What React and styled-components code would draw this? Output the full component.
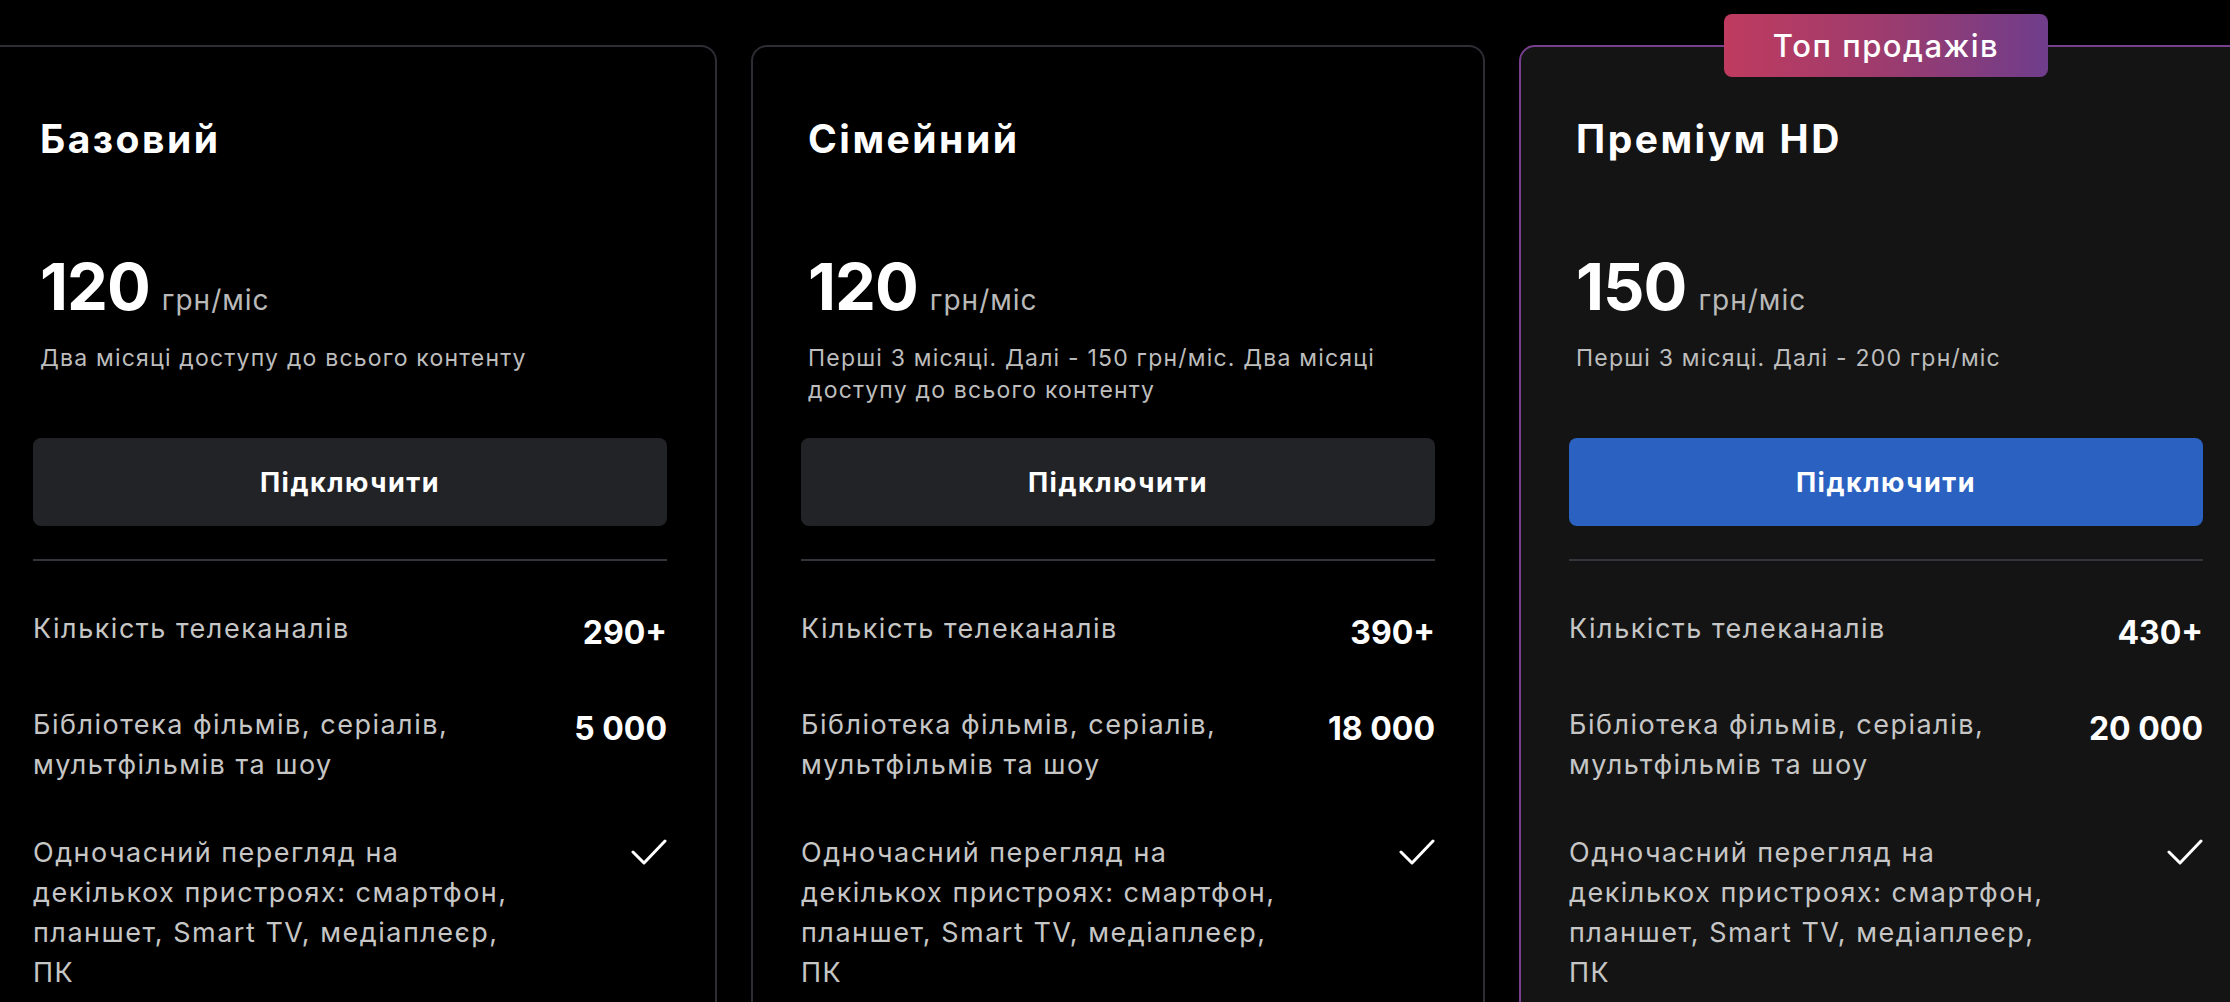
import styled, { createGlobalStyle, css } from 'styled-components';

const GlobalStyle = createGlobalStyle`
  html, body {
    margin: 0;
    padding: 0;
    background: #000;
    overflow: hidden;
  }
  body {
    font-family: Inter, 'Noto Sans', sans-serif;
    color: #fff;
  }
`;

const plans = [
  {
    id: 'basic',
    name: 'Базовий',
    price: '120',
    note: 'Два місяці доступу до всього контенту',
    channels: '290+',
    library: '5 000',
  },
  {
    id: 'family',
    name: 'Сімейний',
    price: '120',
    note: 'Перші 3 місяці. Далі - 150 грн/міс. Два місяці доступу до всього контенту',
    channels: '390+',
    library: '18 000',
  },
  {
    id: 'premium',
    name: 'Преміум HD',
    price: '150',
    note: 'Перші 3 місяці. Далі - 200 грн/міс',
    channels: '430+',
    library: '20 000',
    featured: true,
    badge: 'Топ продажів',
  },
];

function CheckIcon() {
  return (
    <svg width='36' height='26' viewBox='0 0 36 26' fill='none'>
      <polyline
        points='2,13 13,24 34,2'
        stroke='#fff'
        strokeWidth='3'
        strokeLinecap='round'
        strokeLinejoin='round'
      />
    </svg>
  );
}

function PlanCard({ plan }) {
  return (
    <Card $featured={plan.featured}>
      {plan.badge && <Badge>{plan.badge}</Badge>}
      <Header>
        <Title>{plan.name}</Title>
        <PriceLine>
          <Amount>{plan.price}</Amount>
          <Unit>грн/міс</Unit>
        </PriceLine>
        <Note>{plan.note}</Note>
      </Header>
      <ConnectButton $featured={plan.featured}>Підключити</ConnectButton>
      <Divider />
      <Features>
        <Feature>
          <Label>Кількість телеканалів</Label>
          <Value>{plan.channels}</Value>
        </Feature>
        <Feature>
          <Label>Бібліотека фільмів, серіалів, мультфільмів та шоу</Label>
          <Value>{plan.library}</Value>
        </Feature>
        <Feature>
          <Label>
            Одночасний перегляд на декількох пристроях: смартфон, планшет, Smart
            TV, медіаплеєр, ПК
          </Label>
          <Value>
            <CheckIcon />
          </Value>
        </Feature>
      </Features>
    </Card>
  );
}

export default function App() {
  return (
    <>
      <GlobalStyle />
      <Viewport>
        <Track>
          {plans.map((plan) => (
            <PlanCard key={plan.id} plan={plan} />
          ))}
        </Track>
      </Viewport>
    </>
  );
}

const Viewport = styled.section`
  width: 100%;
  height: 1002px;
  overflow: hidden;
`;

// carousel track, scrolled slightly so the first card is clipped
const Track = styled.div`
  display: flex;
  gap: 34px;
  padding-top: 45px;
  transform: translateX(-17px);
`;

const Card = styled.article`
  position: relative;
  flex: 0 0 734px;
  box-sizing: border-box;
  padding: 68px 48px 60px;
  border: 2px solid #2c2e33;
  border-radius: 16px;
  background: #000;
  ${({ $featured }) =>
    $featured &&
    css`
      border-color: #773f8c;
      background: #141414;
    `}
`;

const Badge = styled.div`
  position: absolute;
  top: -33px;
  left: 50%;
  transform: translateX(-50%);
  width: 324px;
  height: 63px;
  display: flex;
  align-items: center;
  justify-content: center;
  border-radius: 8px;
  background: linear-gradient(90deg, #bf3b5f 0%, #9c3c6e 50%, #6f3d8b 100%);
  font-size: 31px;
  font-weight: 500;
  letter-spacing: 1.5px;
  color: #fff;
`;

const Header = styled.div`
  padding: 0 7px;
`;

const Title = styled.h3`
  margin: 0;
  font-size: 39px;
  line-height: 48px;
  font-weight: 700;
  letter-spacing: 2.5px;
`;

const PriceLine = styled.div`
  display: flex;
  align-items: baseline;
  gap: 12px;
  margin-top: 91px;
`;

const Amount = styled.span`
  font-size: 65px;
  line-height: 65px;
  font-weight: 700;
  letter-spacing: -1px;
`;

const Unit = styled.span`
  font-size: 28px;
  letter-spacing: 1px;
  color: #b9b9b9;
`;

const Note = styled.p`
  margin: 23px 0 0;
  max-width: 600px;
  min-height: 66px;
  font-size: 23px;
  line-height: 32px;
  letter-spacing: 1.2px;
  color: #bdbdbd;
`;

const ConnectButton = styled.button`
  display: block;
  width: 100%;
  height: 88px;
  margin-top: 30px;
  border: none;
  border-radius: 8px;
  background: ${({ $featured }) => ($featured ? '#2b62c1' : '#212327')};
  color: #fff;
  font-family: inherit;
  font-size: 27px;
  font-weight: 700;
  letter-spacing: 1.5px;
  cursor: pointer;
`;

const Divider = styled.hr`
  margin: 33px 0 0;
  border: none;
  border-top: 2px solid #33353a;
`;

const Features = styled.ul`
  list-style: none;
  margin: 48px 0 0;
  padding: 0;
  display: flex;
  flex-direction: column;
  gap: 48px;
`;

const Feature = styled.li`
  display: flex;
  justify-content: space-between;
  align-items: flex-start;
  gap: 24px;
`;

const Label = styled.span`
  max-width: 500px;
  font-size: 27px;
  line-height: 40px;
  letter-spacing: 1.5px;
  color: #c6c6c6;
`;

const Value = styled.span`
  display: flex;
  justify-content: flex-end;
  flex-shrink: 0;
  font-size: 32px;
  line-height: 48px;
  font-weight: 700;
  color: #fff;
  svg {
    margin-top: 6px;
  }
`;
